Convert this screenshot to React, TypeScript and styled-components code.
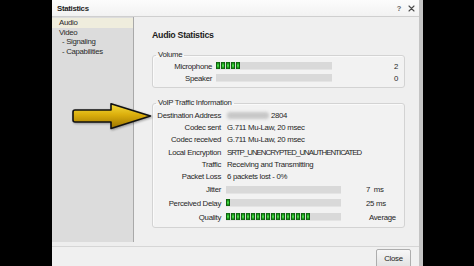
import React from "react";
import styled, { createGlobalStyle } from "styled-components";

const GlobalStyle = createGlobalStyle`
  html, body {
    margin: 0;
    padding: 0;
    background: #000;
  }
  body {
    font-family: "Liberation Sans", Arial, sans-serif;
    font-size: 7.8px;
    letter-spacing: -0.3px;
    color: #222;
  }
`;

type MeterRow = {
  label: string;
  blocks: number;
  value: string;
  indent?: number;
};

type TextRow = {
  label: string;
  value: string;
  masked?: boolean;
  tight?: boolean;
};

const volumeRows: MeterRow[] = [
  { label: "Microphone", blocks: 5, value: "2" },
  { label: "Speaker", blocks: 0, value: "0" },
];

const trafficRows: TextRow[] = [
  { label: "Destination Address", value: "2804", masked: true },
  { label: "Codec sent", value: "G.711 Mu-Law, 20 msec" },
  { label: "Codec received", value: "G.711 Mu-Law, 20 msec" },
  { label: "Local Encryption", value: "SRTP_UNENCRYPTED_UNAUTHENTICATED", tight: true },
  { label: "Traffic", value: "Receiving and Transmitting" },
  { label: "Packet Loss", value: "6 packets lost - 0%" },
];

const qualityRows: MeterRow[] = [
  { label: "Jitter", blocks: 0, value: "7\u00a0\u00a0ms" },
  { label: "Perceived Delay", blocks: 1, value: "25 ms" },
  { label: "Quality", blocks: 17, value: "Average", indent: 3 },
];

const navItems = [
  { text: "Audio", sub: false, active: true },
  { text: "Video", sub: false, active: false },
  { text: "- Signaling", sub: true, active: false },
  { text: "- Capabilities", sub: true, active: false },
];

const Meter = ({ blocks }: { blocks: number }) => (
  <Track>
    {Array.from({ length: blocks }).map((_, i) => (
      <Block key={i} />
    ))}
  </Track>
);

export default function App() {
  return (
    <Page>
      <GlobalStyle />
      <Window>
        <TitleBar>
          <Title>Statistics</Title>
          <Controls>
            <Help>?</Help>
            <svg width="7" height="7" viewBox="0 0 7 7">
              <path
                d="M1 1 L6 6 M6 1 L1 6"
                stroke="#4a4a4a"
                strokeWidth="1.1"
                strokeLinecap="round"
              />
            </svg>
          </Controls>
        </TitleBar>

        <Body>
          <Nav>
            {navItems.map((item) => (
              <NavItem key={item.text} $active={item.active} $sub={item.sub}>
                {item.text}
              </NavItem>
            ))}
          </Nav>

          <Main>
            <Heading>Audio Statistics</Heading>

            <Group>
              <Legend>Volume</Legend>
              <Rows $labelWidth={59} $meterWidth={116} $gap={4} $padRight={6}>
                {volumeRows.map((row) => (
                  <React.Fragment key={row.label}>
                    <Label $height={12}>{row.label}</Label>
                    <Cell $height={12}>
                      <Meter blocks={row.blocks} />
                    </Cell>
                    <Value $height={12} $right>
                      {row.value}
                    </Value>
                  </React.Fragment>
                ))}
              </Rows>
            </Group>

            <Group $spaced>
              <Legend>VoIP Traffic Information</Legend>
              <Rows $labelWidth={68} $meterWidth={115} $gap={5} $padRight={6} $padTop={1}>
                {trafficRows.map((row) => (
                  <React.Fragment key={row.label}>
                    <Label $height={12.3}>{row.label}</Label>
                    <Value $height={12.3} $span $tight={row.tight}>
                      {row.masked && <Blurred />}
                      {row.value}
                    </Value>
                  </React.Fragment>
                ))}
                {qualityRows.map((row) => (
                  <React.Fragment key={row.label}>
                    <Label $height={13.8}>{row.label}</Label>
                    <Cell $height={13.8}>
                      <Meter blocks={row.blocks} />
                    </Cell>
                    <Value $height={13.8} $indent={20 + (row.indent ?? 0)}>
                      {row.value}
                    </Value>
                  </React.Fragment>
                ))}
              </Rows>
            </Group>
          </Main>
        </Body>

        <ButtonBar>
          <CloseButton>Close</CloseButton>
        </ButtonBar>

        <Arrow width="82" height="30" viewBox="0 0 82 30">
          <defs>
            <linearGradient id="gold" x1="0" y1="0" x2="0" y2="1">
              <stop offset="0" stopColor="#f5dc3c" />
              <stop offset="0.45" stopColor="#dbae0c" />
              <stop offset="1" stopColor="#9a7300" />
            </linearGradient>
          </defs>
          <path
            d="M3 8 L39 8 L39 1.8 L78.5 14 L39 26.4 L39 20 L3 20 Q1 20 1 18 L1 10 Q1 8 3 8 Z"
            fill="url(#gold)"
            stroke="#111"
            strokeWidth="1.6"
            strokeLinejoin="round"
          />
        </Arrow>
      </Window>
    </Page>
  );
}

const Page = styled.div`
  width: 474px;
  height: 266px;
  padding-left: 52px;
  box-sizing: border-box;
  background: #000;
  overflow: hidden;
`;

const Window = styled.div`
  position: relative;
  width: 371px;
  height: 266px;
  box-sizing: border-box;
  display: flex;
  flex-direction: column;
  background: #eeeeee;
  border-right: 4px solid #c4c4c4;
`;

const TitleBar = styled.div`
  height: 16px;
  flex: none;
  display: flex;
  align-items: center;
  justify-content: space-between;
  padding: 0 4px 0 5px;
  background: linear-gradient(#fcfcfc, #f2f2f2);
  border-bottom: 1px solid #cfcfcf;
`;

const Title = styled.div`
  font-weight: 700;
  color: #1e1e1e;
`;

const Controls = styled.div`
  display: flex;
  align-items: center;
  gap: 7px;
`;

const Help = styled.span`
  font-size: 7.5px;
  font-weight: 700;
  color: #666;
`;

const Body = styled.div`
  flex: 1;
  display: flex;
  min-height: 0;
`;

const Nav = styled.div`
  width: 81px;
  flex: none;
  margin-bottom: 4px;
  padding-top: 1px;
  background: #dcdcdc;
  border-right: 1px solid #a9a9a9;
`;

const NavItem = styled.div<{ $active: boolean; $sub: boolean }>`
  height: 9.6px;
  line-height: 9.6px;
  padding-left: ${(p) => (p.$sub ? 10 : 7)}px;
  background: ${(p) => (p.$active ? "#efeddd" : "transparent")};
  color: #2a2a2a;
`;

const Main = styled.div`
  flex: 1;
  padding: 13px 14px 0 18px;
  background: #efefef;
`;

const Heading = styled.div`
  font-size: 8.8px;
  line-height: 10px;
  font-weight: 700;
  color: #1c1c1c;
  margin-bottom: 10px;
`;

const Group = styled.fieldset<{ $spaced?: boolean }>`
  margin: ${(p) => (p.$spaced ? "10px" : "0")} 0 0;
  padding: 0 0 3px;
  border: 1px solid #d3d3d3;
  border-radius: 3px;
  box-shadow: inset 1px 1px 0 #fafafa;
  background: #f2f2f2;
  min-width: 0;
`;

const Legend = styled.legend`
  margin-left: 3px;
  padding: 0 2px;
  line-height: 10px;
  color: #2a2a2a;
`;

const Rows = styled.div<{
  $labelWidth: number;
  $meterWidth: number;
  $gap: number;
  $padRight: number;
  $padTop?: number;
}>`
  display: grid;
  grid-template-columns: ${(p) => p.$labelWidth}px ${(p) => p.$meterWidth}px 1fr;
  column-gap: ${(p) => p.$gap}px;
  padding: ${(p) => p.$padTop ?? 0}px ${(p) => p.$padRight}px 0 0;
`;

const Label = styled.div<{ $height: number }>`
  height: ${(p) => p.$height}px;
  display: flex;
  align-items: center;
  justify-content: flex-end;
  white-space: nowrap;
  color: #262626;
`;

const Cell = styled.div<{ $height: number }>`
  height: ${(p) => p.$height}px;
  display: flex;
  align-items: center;
`;

const Value = styled.div<{
  $height: number;
  $right?: boolean;
  $span?: boolean;
  $indent?: number;
  $tight?: boolean;
}>`
  height: ${(p) => p.$height}px;
  display: flex;
  align-items: center;
  justify-content: ${(p) => (p.$right ? "flex-end" : "flex-start")};
  padding-left: ${(p) => p.$indent ?? (p.$span ? 1 : 0)}px;
  grid-column: ${(p) => (p.$span ? "2 / -1" : "auto")};
  letter-spacing: ${(p) => (p.$tight ? "-0.95px" : "inherit")};
  white-space: nowrap;
  color: #262626;
`;

const Track = styled.div`
  width: 100%;
  height: 7px;
  display: flex;
  background: #d9d9d9;
  border-bottom: 1px solid #e4e4e4;
`;

const Block = styled.div`
  width: 4px;
  height: 100%;
  margin-right: 1px;
  background: linear-gradient(#0c5c0c, #2fc22f 35%, #4ee24e 55%, #1f9a1f 80%, #0c5c0c);
  box-shadow: inset 1px 0 0 #0f5f0f, inset -1px 0 0 #0f5f0f;
`;

const Blurred = styled.span`
  display: inline-block;
  width: 42px;
  height: 7px;
  margin-right: 2px;
  background: #c7c7c7;
  border-radius: 3px;
  filter: blur(1.5px);
`;

const ButtonBar = styled.div`
  flex: none;
  display: flex;
  justify-content: flex-end;
  align-items: flex-start;
  padding: 2px 8px 0 0;
  background: #f0f0f0;
  border-top: 1px solid #d6d6d6;
  box-sizing: border-box;
  height: 20px;
`;

const CloseButton = styled.button`
  width: 35px;
  height: 19px;
  padding: 0;
  font-family: inherit;
  font-size: 7.8px;
  letter-spacing: inherit;
  color: #222;
  border: 1px solid #adadad;
  border-radius: 2px;
  background: linear-gradient(#f7f7f7, #e2e2e2);
`;

const Arrow = styled.svg`
  position: absolute;
  left: 20px;
  top: 102px;
  filter: drop-shadow(1px 1px 1px rgba(0, 0, 0, 0.35));
`;
